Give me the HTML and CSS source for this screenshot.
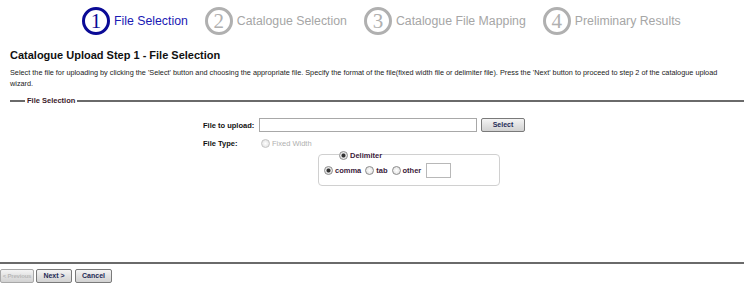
FILE: index.html
```html
<!DOCTYPE html>
<html lang="en">
<head>
    <meta charset="UTF-8">
    <title>Catalogue Upload</title>
    <link rel="stylesheet" href="styles.css">
</head>
<body>
    <div class="steps">
        <div class="step active"><span class="num">1</span><span class="label">File Selection</span></div>
        <div class="step"><span class="num">2</span><span class="label">Catalogue Selection</span></div>
        <div class="step"><span class="num">3</span><span class="label">Catalogue File Mapping</span></div>
        <div class="step"><span class="num">4</span><span class="label">Preliminary Results</span></div>
    </div>

    <h1 class="title">Catalogue Upload Step 1 - File Selection</h1>
    <p class="intro">Select the file for uploading by clicking the 'Select' button and choosing the appropriate file. Specify the format of the file(fixed width file or delimiter file). Press the 'Next' button to proceed to step 2 of the catalogue upload wizard.</p>

    <fieldset class="section">
        <legend>File Selection</legend>
        <div class="form">
            <div class="row">
                <span class="field-label">File to upload:</span>
                <input class="file-input" type="text">
                <button class="btn select-btn">Select</button>
            </div>
            <div class="row">
                <span class="field-label">File Type:</span>
                <label class="opt disabled"><input type="radio" name="ftype" disabled> Fixed Width</label>
            </div>
            <fieldset class="delim">
                <legend><label class="opt strong"><input type="radio" name="ftype" checked> Delimiter</label></legend>
                <div class="delim-row">
                    <label class="opt strong"><input type="radio" name="sep" checked> comma</label>
                    <label class="opt strong"><input type="radio" name="sep"> tab</label>
                    <label class="opt strong"><input type="radio" name="sep"> other</label>
                    <input class="other-input" type="text">
                </div>
            </fieldset>
        </div>
    </fieldset>

    <div class="footer">
        <button class="btn prev-btn" disabled>&lt; Previous</button>
        <button class="btn next-btn">Next &gt;</button>
        <button class="btn cancel-btn">Cancel</button>
    </div>
</body>
</html>
```

FILE: styles.css
```css
body {
    margin: 0;
    background-color: #ffffff;
    font-family: 'Liberation Sans', Arial, sans-serif;
    color: #111;
}
.steps {
    display: flex;
    align-items: center;
    gap: 17px;
    height: 42px;
    padding-left: 82px;
}
.step {
    display: flex;
    align-items: center;
    gap: 4px;
    color: #a6a6a6;
}
.num {
    width: 22px;
    height: 22px;
    border: 3px solid #b0b0b0;
    border-radius: 50%;
    display: flex;
    align-items: center;
    justify-content: center;
    font-family: 'Liberation Serif', serif;
    font-size: 21px;
    line-height: 1;
    color: #b0b0b0;
}
.label {
    font-size: 12.3px;
}
.step.active .num {
    border-color: #0a0a96;
    color: #0a0a96;
}
.step.active .label {
    color: #1a1ab4;
}
.title {
    margin: 6px 0 0 10px;
    font-size: 11px;
    line-height: 14px;
    font-weight: bold;
}
.intro {
    margin: 5px 8px 0 10px;
    font-size: 7.3px;
    line-height: 11px;
    color: #222;
}
.section {
    margin: 7px 0 0 10px;
    padding: 13px 0 0 0;
    border: none;
    border-top: 2px solid #6a6a6a;
    height: 143px;
}
.section legend {
    margin-left: 15px;
    padding: 0 2px;
    font-size: 7.5px;
    font-weight: bold;
    color: #3a1a2a;
}
.form {
    margin-left: 193px;
}
.row {
    display: flex;
    align-items: center;
    margin-bottom: 7px;
}
.field-label {
    width: 56px;
    font-size: 7.5px;
    font-weight: bold;
}
.file-input {
    width: 216px;
    height: 12px;
    margin: 0;
    padding: 0;
    border: 1px solid #a8a8a8;
}
.btn {
    height: 14px;
    padding: 0;
    border: 1px solid #7a7a7a;
    border-radius: 2px;
    background: linear-gradient(#f4f4f4, #e2e2e2 50%, #d2d2d2);
    font-family: 'Liberation Sans', Arial, sans-serif;
    font-size: 7px;
    font-weight: bold;
    color: #1e2a55;
    line-height: 12px;
    white-space: nowrap;
}
.btn:disabled {
    color: #b8b8b8;
    border-color: #a8a8a8;
}
.select-btn {
    width: 44px;
    margin-left: 4px;
}
.prev-btn {
    width: 34px;
    font-size: 6px;
    letter-spacing: -0.2px;
}
.next-btn {
    width: 36px;
    margin-left: 2px;
}
.cancel-btn {
    width: 37px;
    margin-left: 3px;
}
.opt {
    display: inline-flex;
    align-items: center;
    gap: 2px;
    font-size: 7.5px;
    color: #3a1a3a;
}
.opt.strong {
    font-weight: bold;
}
.opt.disabled {
    margin-left: 2px;
    color: #b0b0b0;
}
.opt input {
    appearance: none;
    width: 9px;
    height: 9px;
    margin: 0;
    border: 1px solid #8c8c8c;
    border-radius: 50%;
    background: radial-gradient(#ffffff, #dcdcdc);
}
.opt input:checked {
    background: radial-gradient(#333 0, #333 1.5px, #e8e8e8 2.5px);
}
.opt input:disabled {
    border-color: #c4c4c4;
}
.delim {
    width: 170px;
    margin: -8px 0 0 115px;
    padding: 0 5px 7px 5px;
    border: 1px solid #d0d0d0;
    border-radius: 4px;
}
.delim legend {
    padding: 4px 0 0 0;
}
.delim-row {
    display: flex;
    align-items: center;
    gap: 4px;
    margin-top: 1px;
}
.other-input {
    width: 23px;
    height: 13px;
    margin: 0 0 0 1px;
    padding: 0;
    border: 1px solid #b8b8b8;
}
.footer {
    margin-top: 8px;
    border-top: 2px solid #6a6a6a;
    padding: 5px 0 0 0;
    display: flex;
}
```
